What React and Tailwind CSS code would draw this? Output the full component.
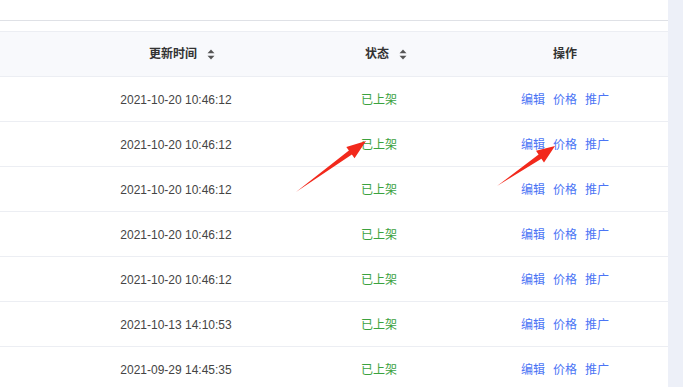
import React from "react";

const rows = [
  "2021-10-20 10:46:12",
  "2021-10-20 10:46:12",
  "2021-10-20 10:46:12",
  "2021-10-20 10:46:12",
  "2021-10-20 10:46:12",
  "2021-10-13 14:10:53",
  "2021-09-29 14:45:35",
];

const SortCaret = () => (
  <svg width="8" height="11" viewBox="0 0 8 11" className="ml-[10px]">
    <path d="M4 0.5 L7.5 4.2 L0.5 4.2 Z" fill="#555" />
    <path d="M4 10.5 L7.5 6.8 L0.5 6.8 Z" fill="#555" />
  </svg>
);

const App = () => {
  return (
    <div
      className="flex w-[683px] h-[387px] overflow-hidden bg-white text-[12px]"
      style={{ fontFamily: '"Liberation Sans", "Noto Sans CJK SC", sans-serif' }}
    >
      <div className="relative w-[668px] shrink-0 bg-white">
        <div className="h-[21px] border-b border-[#dfe1e6]" />
        <div className="h-[10px]" />
        <div className="border-t border-[#eceef3]">
          {/* header */}
          <div className="grid grid-cols-[54px_242px_166px_206px] h-[45px] bg-[#f8f9fc] border-b border-[#eceef3] text-[#333] font-bold">
            <div />
            <div className="flex items-center justify-center pl-[14px]">
              <span>更新时间</span>
              <SortCaret />
            </div>
            <div className="flex items-center justify-center pl-[14px]">
              <span>状态</span>
              <SortCaret />
            </div>
            <div className="flex items-center justify-center">
              <span>操作</span>
            </div>
          </div>
          {rows.map((time, i) => (
            <div
              key={i}
              className="grid grid-cols-[54px_242px_166px_206px] h-[45px] pt-[2px] border-b border-[#eceef3]"
            >
              <div />
              <div className="flex items-center justify-center pl-[2px] text-[#444]">{time}</div>
              <div className="flex items-center justify-center text-[#3ba23f]">已上架</div>
              <div className="flex items-center justify-center gap-[8px] text-[#4b74f5]">
                <span>编辑</span>
                <span>价格</span>
                <span>推广</span>
              </div>
            </div>
          ))}
        </div>
        <svg
          className="absolute left-0 top-0 pointer-events-none"
          width="668"
          height="387"
          viewBox="0 0 668 387"
        >
          <polygon
            points="296,192 348.9,150.6 346.3,146.9 366,141 354.5,158.3 351.9,154.6"
            fill="#f2291c"
          />
          <polygon
            points="497,186 538.6,154.5 536,150.8 555,146 544,162.4 541.4,158.7"
            fill="#f2291c"
          />
        </svg>
      </div>
      <div className="flex-1 bg-[#edf0f8]" />
    </div>
  );
};

export default App;
